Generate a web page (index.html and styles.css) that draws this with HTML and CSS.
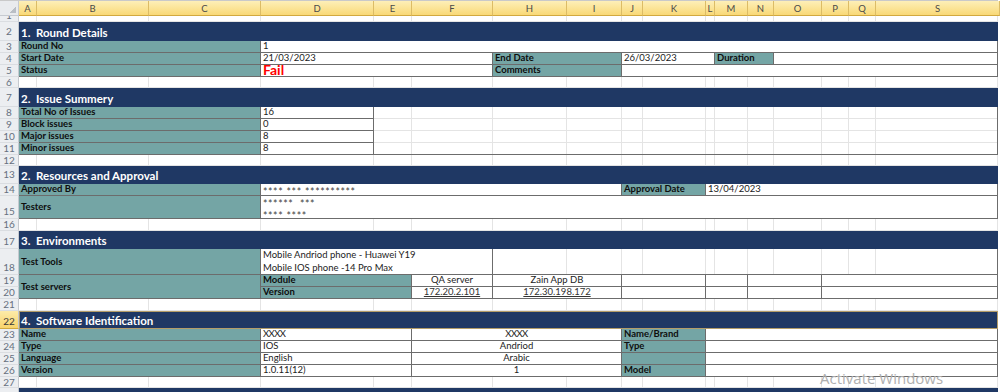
FILE: index.html
```html
<!DOCTYPE html>
<html>
<head>
<meta charset="utf-8">
<title>Round Report</title>
<link rel="stylesheet" href="styles.css">
</head>
<body>
<div class="sheet">
  <div class="corner"></div>
  <div class="colhead">
    <span>A</span><span>B</span><span>C</span><span>D</span><span>E</span><span>F</span><span>H</span><span>I</span><span>J</span><span>K</span><span>L</span><span>M</span><span>N</span><span>O</span><span>P</span><span>Q</span><span>S</span>
  </div>
  <div class="rowhead">
    <span class="clip">1</span><span>2</span><span>3</span><span>4</span><span>5</span><span>6</span><span>7</span><span>8</span><span>9</span><span>10</span><span>11</span><span>12</span><span>13</span><span>14</span><span class="low">15</span><span>16</span><span class="low">17</span><span class="low">18</span><span>19</span><span>20</span><span>21</span><span class="sel low">22</span><span>23</span><span>24</span><span>25</span><span>26</span><span>27</span><span class="top">28</span>
  </div>
  <div class="vlines"><i></i><i></i><i></i><i></i><i></i><i></i><i></i><i></i><i></i><i></i><i></i><i></i><i></i><i></i><i></i><i></i><i></i></div>
  <div class="hlines"><i></i><i></i><i></i><i></i><i></i><i></i><i></i><i></i><i></i><i></i><i></i><i></i><i></i><i></i><i></i><i></i><i></i><i></i><i></i><i></i><i></i><i></i><i></i><i></i><i></i><i></i><i></i><i></i></div>

  <!-- 1. Round Details -->
  <div class="title r2">1.  Round Details</div>
  <div class="lbl cAC r3">Round No</div>
  <div class="val cDS r3">1</div>
  <div class="lbl cAC r4">Start Date</div>
  <div class="val cDF r4">21/03/2023</div>
  <div class="lbl cHI r4">End Date</div>
  <div class="val cJL r4">26/03/2023</div>
  <div class="lbl cMN r4">Duration</div>
  <div class="val cOS r4"></div>
  <div class="lbl cAC r5">Status</div>
  <div class="val cDF r5 fail">Fail</div>
  <div class="lbl cHI r5">Comments</div>
  <div class="val cJS r5"></div>

  <!-- 2. Issue Summery -->
  <div class="title r7">2.  Issue Summery</div>
  <div class="lbl cAC r8">Total No of Issues</div>
  <div class="val cD r8">16</div>
  <div class="lbl cAC r9">Block issues</div>
  <div class="val cD r9">0</div>
  <div class="lbl cAC r10">Major issues</div>
  <div class="val cD r10">8</div>
  <div class="lbl cAC r11">Minor issues</div>
  <div class="val cD r11">8</div>
  <div class="box cES r8to11"></div>

  <!-- 2. Resources and Approval -->
  <div class="title r13">2.  Resources and Approval</div>
  <div class="lbl cAC r14">Approved By</div>
  <div class="val cDI r14 stars oneline">**** *** **********</div>
  <div class="lbl cJK r14">Approval Date</div>
  <div class="val cLS r14">13/04/2023</div>
  <div class="lbl cAC r15 mid">Testers</div>
  <div class="val cDS r15 multi testers stars"><span>****** &nbsp;***</span><span>**** ****</span></div>

  <!-- 3. Environments -->
  <div class="title r17">3.  Environments</div>
  <div class="lbl cAC r18 mid">Test Tools</div>
  <div class="val cDF r18 multi tools"><span>Mobile Andriod phone - Huawei Y19</span><span>Mobile IOS phone -14 Pro Max</span></div>
  <div class="box cHS r18"></div>
  <div class="lbl cAC r19to20 mid">Test servers</div>
  <div class="lbl cDE r19">Module</div>
  <div class="val cF r19 center">QA server</div>
  <div class="val cHI r19 center">Zain App DB</div>
  <div class="val cJK r19"></div>
  <div class="val cLM r19"></div>
  <div class="val cNO r19"></div>
  <div class="val cPS r19"></div>
  <div class="lbl cDE r20">Version</div>
  <div class="val cF r20 center"><u>172.20.2.101</u></div>
  <div class="val cHI r20 center"><u>172.30.198.172</u></div>
  <div class="val cJK r20"></div>
  <div class="val cLM r20"></div>
  <div class="val cNO r20"></div>
  <div class="val cPS r20"></div>

  <!-- 4. Software Identification -->
  <div class="title r22 selected">4.  Software Identification</div>
  <div class="lbl cAC r23">Name</div>
  <div class="val cDE r23 xs">XXXX</div>
  <div class="val cFI r23 center xs">XXXX</div>
  <div class="lbl cJK r23">Name/Brand</div>
  <div class="val cLS r23"></div>
  <div class="lbl cAC r24">Type</div>
  <div class="val cDE r24">IOS</div>
  <div class="val cFI r24 center">Andriod</div>
  <div class="lbl cJK r24">Type</div>
  <div class="val cLS r24"></div>
  <div class="lbl cAC r25">Language</div>
  <div class="val cDE r25">English</div>
  <div class="val cFI r25 center">Arabic</div>
  <div class="lbl cJK r25"></div>
  <div class="val cLS r25"></div>
  <div class="lbl cAC r26">Version</div>
  <div class="val cDE r26">1.0.11(12)</div>
  <div class="val cFI r26 center">1</div>
  <div class="lbl cJK r26">Model</div>
  <div class="val cLS r26"></div>

  <div class="title r28"></div>
</div>
<div class="watermark">Activate Windows</div>
</body>
</html>
```

FILE: styles.css
```css
:root {
  --cols: 18px 112px 112px 113px 38px 81px 74px 55px 21px 63px 9px 33px 26px 48px 27px 27px 122px;
  --rows: 6px 19px 12px 12px 12px 11px 19px 12px 12px 12px 12px 11px 18px 12px 23px 12px 18px 26px 12px 12px 12px 18px 12px 12px 12px 12px 11px 18px;
  --navy: #1f3864;
  --teal: #74a5a5;
  --line: #6c6c6c;
  --grid: #e4e4e4;
}

html, body {
  margin: 0;
  height: 392px;
  overflow: hidden;
  background: #fff;
}

body {
  font-family: Lato, "Open Sans", sans-serif;
  position: relative;
}

.sheet {
  display: grid;
  grid-template-columns: 19px var(--cols);
  grid-template-rows: 16px var(--rows);
  width: 1000px;
}

/* headers */
.corner {
  grid-area: 1 / 1 / 2 / 2;
  border-top: 1px solid #c9c9c9;
  border-right: 1px solid #c6cad0;
  border-bottom: 1px solid #c6cad0;
  background: #e9ebee linear-gradient(to bottom right, transparent 50%, #b9bec5 50%) no-repeat right 2px bottom 2px / 7px 7px;
}

.colhead {
  grid-area: 1 / 2 / 2 / -1;
  display: grid;
  grid-template-columns: var(--cols);
  border-top: 1px solid #c9c9c9;
}

.colhead span {
  background: linear-gradient(#fdefb8, #f9d977);
  border-right: 1px solid #dcbc66;
  border-bottom: 1px solid #d2a93f;
  font-size: 9.5px;
  color: #4a4a4a;
  display: flex;
  align-items: center;
  justify-content: center;
}

.colhead span:last-child {
  margin-right: -2px;
}

.rowhead {
  grid-area: 2 / 1 / -1 / 2;
  display: grid;
  grid-template-rows: var(--rows);
}

.rowhead span {
  background: #eceef1;
  border-right: 1px solid #c5c9cf;
  border-bottom: 1px solid #dadde1;
  color: #667080;
  font-size: 10px;
  line-height: 11px;
  display: flex;
  align-items: center;
  justify-content: center;
  overflow: hidden;
}

.rowhead .clip {
  align-items: flex-end;
  line-height: 12px;
}

.rowhead .low {
  align-items: flex-end;
  padding-bottom: 1px;
}

.rowhead .top {
  align-items: flex-start;
  padding-top: 4px;
}

.rowhead .sel {
  background: linear-gradient(#fdeba9, #f8d46c);
  color: #3a3a3a;
  border-bottom-color: #d2a93f;
}

/* gridlines */
.vlines {
  grid-area: 2 / 2 / -1 / -1;
  display: grid;
  grid-template-columns: var(--cols);
}

.vlines i {
  border-right: 1px solid var(--grid);
}

.hlines {
  grid-area: 2 / 2 / -1 / -1;
  display: grid;
  grid-template-rows: var(--rows);
}

.hlines i {
  border-bottom: 1px solid var(--grid);
}

/* rows */
.r2 { grid-row: 3; }
.r3 { grid-row: 4; }
.r4 { grid-row: 5; }
.r5 { grid-row: 6; }
.r7 { grid-row: 8; }
.r8 { grid-row: 9; }
.r9 { grid-row: 10; }
.r10 { grid-row: 11; }
.r11 { grid-row: 12; }
.r8to11 { grid-row: 9 / 13; }
.r13 { grid-row: 14; }
.r14 { grid-row: 15; }
.r15 { grid-row: 16; }
.r17 { grid-row: 18; }
.r18 { grid-row: 19; }
.r19 { grid-row: 20; }
.r20 { grid-row: 21; }
.r19to20 { grid-row: 20 / 22; }
.r22 { grid-row: 23; }
.r23 { grid-row: 24; }
.r24 { grid-row: 25; }
.r25 { grid-row: 26; }
.r26 { grid-row: 27; }
.r28 { grid-row: 29; }

/* column spans */
.cAC { grid-column: 2 / 5; }
.cD { grid-column: 5 / 6; }
.cDE { grid-column: 5 / 7; }
.cDF { grid-column: 5 / 8; }
.cDI { grid-column: 5 / 10; }
.cDS { grid-column: 5 / 19; }
.cES { grid-column: 6 / 19; }
.cF { grid-column: 7 / 8; }
.cFI { grid-column: 7 / 10; }
.cHI { grid-column: 8 / 10; }
.cHS { grid-column: 8 / 19; }
.cJK { grid-column: 10 / 12; }
.cJL { grid-column: 10 / 13; }
.cJS { grid-column: 10 / 19; }
.cLM { grid-column: 12 / 14; }
.cLS { grid-column: 12 / 19; }
.cMN { grid-column: 13 / 15; }
.cNO { grid-column: 14 / 16; }
.cOS { grid-column: 15 / 19; }
.cPS { grid-column: 16 / 19; }

/* cells */
.title {
  grid-column: 2 / 19;
  background: var(--navy);
  color: #fff;
  font-weight: 700;
  font-size: 11.5px;
  display: flex;
  align-items: center;
  padding: 1px 0 0 2px;
  white-space: pre;
}

.title.selected {
  border: 1px solid #b39c68;
  padding-left: 1px;
}

.lbl, .val {
  border-right: 1px solid var(--line);
  border-bottom: 1px solid var(--line);
  display: flex;
  align-items: flex-end;
  padding: 0 2px 1px;
  font-size: 9.5px;
  line-height: 11px;
  white-space: nowrap;
  color: #1c1c1c;
  min-width: 0;
}

.lbl {
  background: var(--teal);
  font-weight: 700;
  color: #0e0e0e;
}

.val {
  background: #fff;
}

.box {
  border-right: 1px solid var(--line);
  border-bottom: 1px solid var(--line);
}

.mid { align-items: center; }
.center { justify-content: center; }

.multi {
  flex-direction: column;
  align-items: flex-start;
  justify-content: flex-end;
  padding-bottom: 0;
}

.testers { line-height: 11.5px; }
.testers span:last-child { margin-bottom: -4px; }
.tools { line-height: 13px; }

.stars {
  color: #444;
  font-size: 10.5px;
  letter-spacing: 0.6px;
}

.stars.oneline {
  line-height: 6px;
  padding-bottom: 0;
}

.xs { letter-spacing: -0.6px; }

.fail {
  color: #ff0000;
  font-weight: 700;
  font-size: 14px;
  line-height: 12px;
  padding-bottom: 0;
}

u { color: #333; }

.watermark {
  position: absolute;
  left: 820px;
  top: 368px;
  font-family: "Open Sans", sans-serif;
  font-size: 15px;
  color: #b0b0b0;
  white-space: nowrap;
}
```
